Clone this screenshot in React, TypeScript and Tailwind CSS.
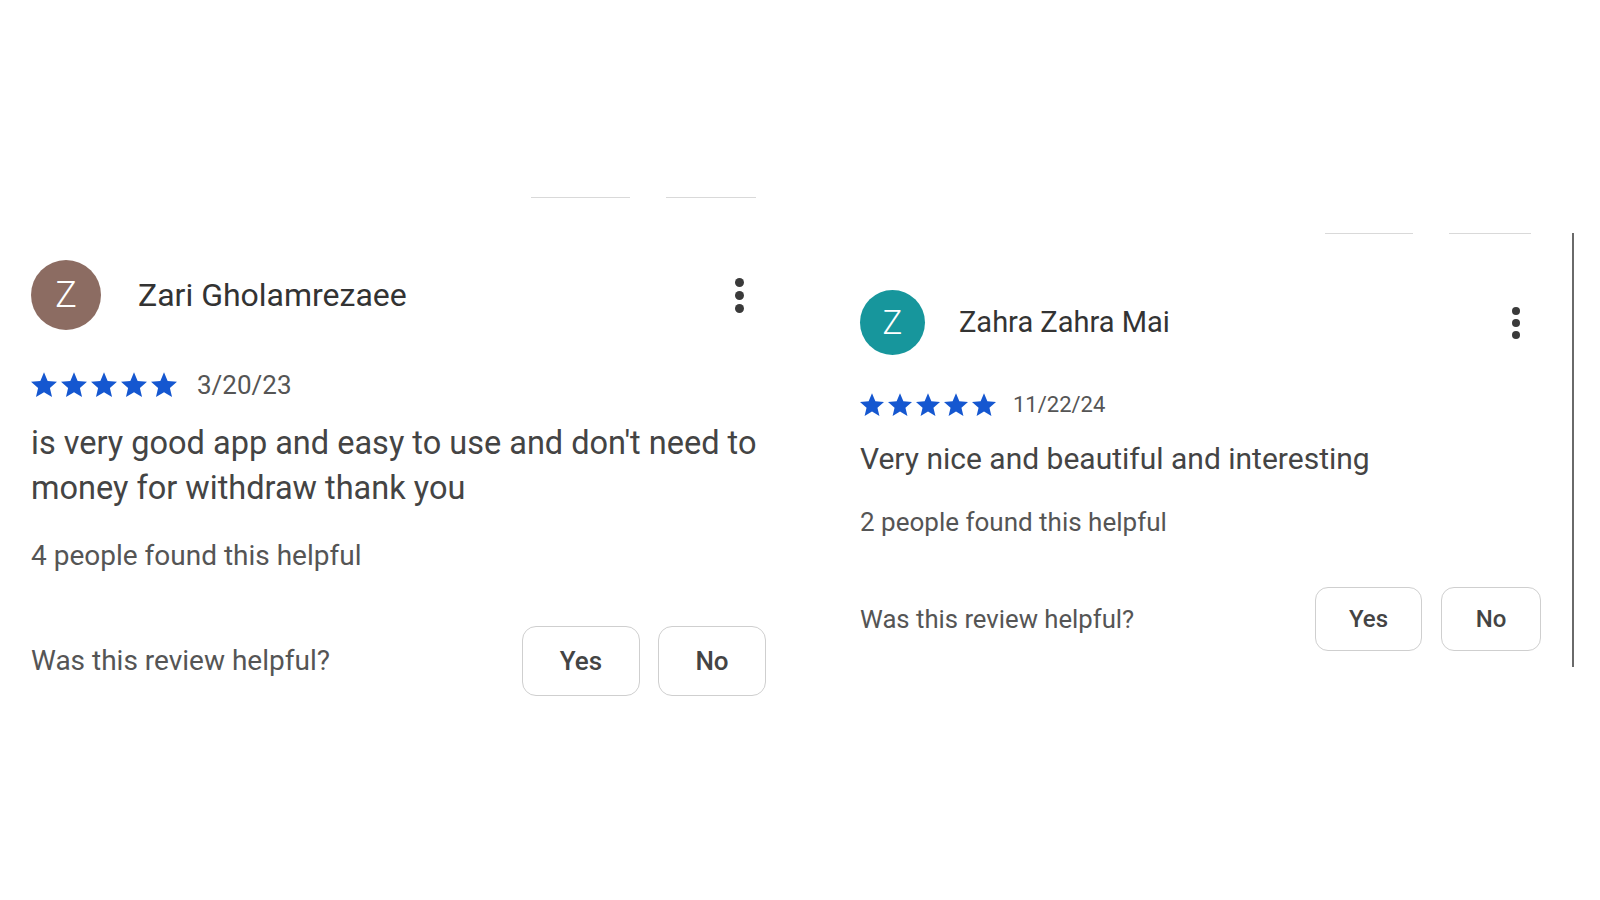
import React from "react";

const StarPath = "M12 17.27L18.18 21l-1.64-7.03L22 9.24l-7.19-.61L12 2 9.19 8.63 2 9.24l5.46 4.73L5.82 21z";

function Stars({ size, gap }: { size: number; gap: string }) {
  return (
    <div className={`flex ${gap}`}>
      {[0, 1, 2, 3, 4].map((i) => (
        <svg key={i} width={size} height={size} viewBox="2 2 20 19.5" fill="#1557d0">
          <path d={StarPath} />
        </svg>
      ))}
    </div>
  );
}

function Kebab({ dot, gap }: { dot: string; gap: string }) {
  return (
    <div className={`flex flex-col ${gap}`}>
      <div className={`${dot} rounded-full bg-[#3a3a3a]`} />
      <div className={`${dot} rounded-full bg-[#3a3a3a]`} />
      <div className={`${dot} rounded-full bg-[#3a3a3a]`} />
    </div>
  );
}

export default function App() {
  return (
    <div
      className="w-[1600px] h-[900px] bg-white flex items-start overflow-hidden"
      style={{ fontFamily: "Roboto, 'Noto Sans', Arial, sans-serif" }}
    >
      {/* Left review */}
      <div className="ml-[31px] mt-[197px] w-[735px] flex flex-col">
        <div className="flex h-[1px]">
          <div className="ml-[500px] w-[99px] h-[1px] bg-[#d9d9d9]" />
          <div className="ml-[36px] w-[90px] h-[1px] bg-[#d9d9d9]" />
        </div>
        <div className="mt-[62px] flex items-center h-[70px]">
          <div className="w-[70px] h-[70px] rounded-full bg-[#8c6c62] flex items-center justify-center text-white text-[36px] font-light leading-none">
            Z
          </div>
          <div className="ml-[37px] text-[32px] leading-none text-[#333]">
            Zari Gholamrezaee
          </div>
          <div className="ml-auto mr-[22px]">
            <Kebab dot="w-[9px] h-[9px]" gap="gap-[4px]" />
          </div>
        </div>
        <div className="mt-[42px] flex items-center h-[26px]">
          <Stars size={26} gap="gap-[4px]" />
          <span className="ml-[20px] text-[26px] leading-[26px] text-[#555]">3/20/23</span>
        </div>
        <div className="mt-[23px] text-[32.5px] leading-[45px] text-[#444]">
          is very good app and easy to use and don't need to
          <br />
          money for withdraw thank you
        </div>
        <div className="mt-[29px] text-[28px] leading-[32px] text-[#555]">4 people found this helpful</div>
        <div className="mt-[54px] flex items-center h-[70px]">
          <div className="text-[28px] text-[#555]">Was this review helpful?</div>
          <div className="ml-auto flex gap-[18px]">
            <div className="w-[118px] h-[70px] rounded-[14px] border-[1.5px] border-[#cfcfcf] flex items-center justify-center text-[26px] font-medium text-[#444]">
              Yes
            </div>
            <div className="w-[108px] h-[70px] rounded-[14px] border-[1.5px] border-[#cfcfcf] flex items-center justify-center text-[26px] font-medium text-[#444]">
              No
            </div>
          </div>
        </div>
      </div>

      {/* Right review */}
      <div className="ml-[94px] mt-[233px] w-[714px] pr-[31px] pb-[16px] border-r-2 border-[#6a6a6a] flex flex-col">
        <div className="flex h-[1px]">
          <div className="ml-[465px] w-[88px] h-[1px] bg-[#d9d9d9]" />
          <div className="ml-[36px] w-[82px] h-[1px] bg-[#d9d9d9]" />
        </div>
        <div className="mt-[56px] flex items-center h-[65px]">
          <div className="w-[65px] h-[65px] rounded-full bg-[#17969c] flex items-center justify-center text-white text-[33px] font-light leading-none">
            Z
          </div>
          <div className="ml-[34px] text-[29px] leading-none text-[#333]">Zahra Zahra Mai</div>
          <div className="ml-auto mr-[21px]">
            <Kebab dot="w-[8px] h-[8px]" gap="gap-[4px]" />
          </div>
        </div>
        <div className="mt-[38px] flex items-center h-[24px]">
          <Stars size={24} gap="gap-[4px]" />
          <span className="ml-[17px] text-[22px] leading-[24px] text-[#555]">11/22/24</span>
        </div>
        <div className="mt-[22px] text-[30px] leading-[40px] text-[#444]">
          Very nice and beautiful and interesting
        </div>
        <div className="mt-[28px] text-[26px] leading-[30px] text-[#555]">2 people found this helpful</div>
        <div className="mt-[50px] flex items-center h-[64px]">
          <div className="text-[25.7px] text-[#555]">Was this review helpful?</div>
          <div className="ml-auto flex gap-[19px]">
            <div className="w-[107px] h-[64px] rounded-[13px] border-[1.5px] border-[#cfcfcf] flex items-center justify-center text-[24px] font-medium text-[#444]">
              Yes
            </div>
            <div className="w-[100px] h-[64px] rounded-[13px] border-[1.5px] border-[#cfcfcf] flex items-center justify-center text-[24px] font-medium text-[#444]">
              No
            </div>
          </div>
        </div>
      </div>
    </div>
  );
}
